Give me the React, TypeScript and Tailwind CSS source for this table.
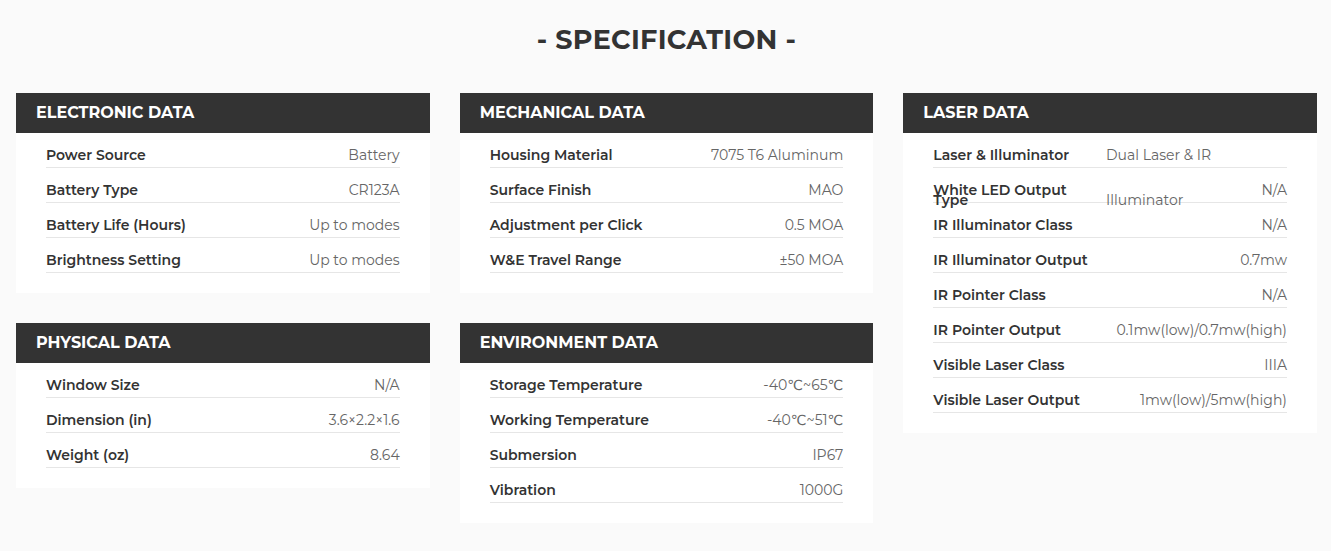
import React from 'react';

type Row = { label: string; value: string };
type Section = { title: string; rows: Row[] };

const electronic: Section = {
  title: 'ELECTRONIC DATA',
  rows: [
    { label: 'Power Source', value: 'Battery' },
    { label: 'Battery Type', value: 'CR123A' },
    { label: 'Battery Life (Hours)', value: 'Up to modes' },
    { label: 'Brightness Setting', value: 'Up to modes' },
  ],
};

const physical: Section = {
  title: 'PHYSICAL DATA',
  rows: [
    { label: 'Window Size', value: 'N/A' },
    { label: 'Dimension (in)', value: '3.6×2.2×1.6' },
    { label: 'Weight (oz)', value: '8.64' },
  ],
};

const mechanical: Section = {
  title: 'MECHANICAL DATA',
  rows: [
    { label: 'Housing Material', value: '7075 T6 Aluminum' },
    { label: 'Surface Finish', value: 'MAO' },
    { label: 'Adjustment per Click', value: '0.5 MOA' },
    { label: 'W&E Travel Range', value: '±50 MOA' },
  ],
};

const environment: Section = {
  title: 'ENVIRONMENT DATA',
  rows: [
    { label: 'Storage Temperature', value: '-40℃~65℃' },
    { label: 'Working Temperature', value: '-40℃~51℃' },
    { label: 'Submersion', value: 'IP67' },
    { label: 'Vibration', value: '1000G' },
  ],
};

const laser: Section = {
  title: 'LASER DATA',
  rows: [
    { label: 'Laser & Illuminator Type', value: 'Dual Laser & IR Illuminator' },
    { label: 'White LED Output', value: 'N/A' },
    { label: 'IR Illuminator Class', value: 'N/A' },
    { label: 'IR Illuminator Output', value: '0.7mw' },
    { label: 'IR Pointer Class', value: 'N/A' },
    { label: 'IR Pointer Output', value: '0.1mw(low)/0.7mw(high)' },
    { label: 'Visible Laser Class', value: 'IIIA' },
    { label: 'Visible Laser Output', value: '1mw(low)/5mw(high)' },
  ],
};

function SpecCard({ section }: { section: Section }) {
  return (
    <div className="bg-white">
      <div className="h-[40px] bg-[#333333] pl-[20px] flex items-center">
        <h3 className="text-white text-[16px] font-bold">{section.title}</h3>
      </div>
      <ul className="px-[30px] pb-[20px]">
        {section.rows.map((row, i) => (
          // filas de alto fijo: el texto que no cabe se sale por debajo
          <li
            key={`${row.label}-${i}`}
            className="h-[35px] leading-[45px] border-b border-[#e6e6e6] flex justify-between"
          >
            <span className="w-[165px] shrink-0 text-[14px] font-semibold text-[#333333]">{row.label}</span>
            <span className="max-w-[181px] text-left text-[14px] text-[#666666]">{row.value}</span>
          </li>
        ))}
      </ul>
    </div>
  );
}

export default function App() {
  return (
    <div
      className="min-h-[551px] bg-[#fafafa] pl-[16px] pr-[14px]"
      style={{ fontFamily: '"Montserrat", "Open Sans", "DejaVu Sans", sans-serif' }}
    >
      <h1 className="pt-[23px] text-center text-[27px] leading-[34px] font-bold text-[#333333] tracking-[0.3px]">
        - SPECIFICATION -
      </h1>

      <div className="mt-[36px] grid grid-cols-3 gap-[30px] items-start">
        <div className="flex flex-col gap-[30px]">
          <SpecCard section={electronic} />
          <SpecCard section={physical} />
        </div>
        <div className="flex flex-col gap-[30px]">
          <SpecCard section={mechanical} />
          <SpecCard section={environment} />
        </div>
        <div className="flex flex-col gap-[30px]">
          <SpecCard section={laser} />
        </div>
      </div>
    </div>
  );
}
